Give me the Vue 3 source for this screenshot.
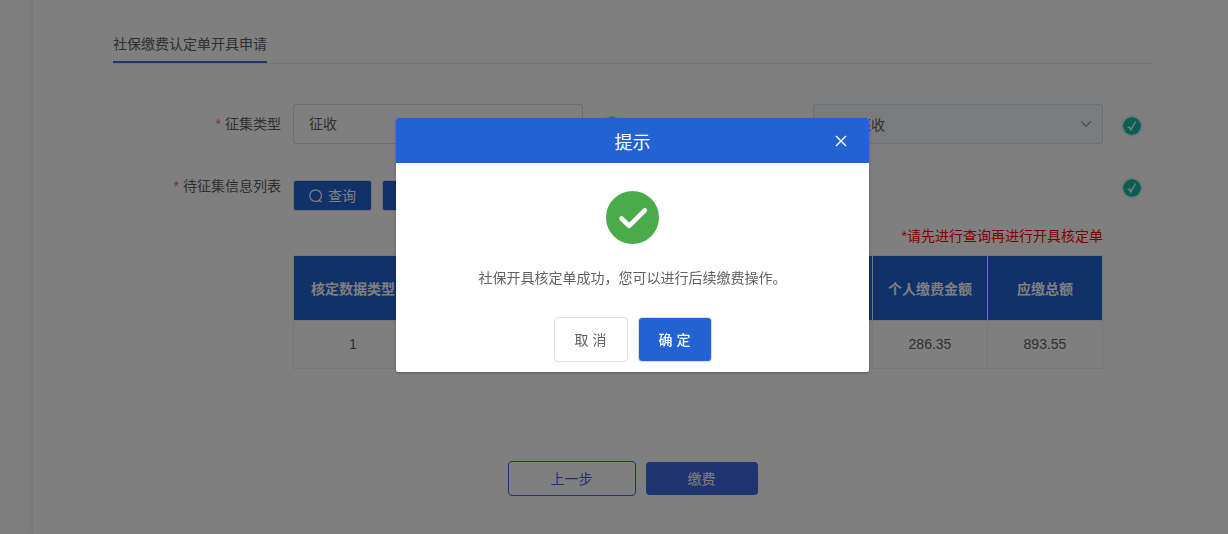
<script setup>
import { ref } from 'vue'

const collectType = ref('征收')
const collectMode = ref('正常征收')
const dialogOpen = ref(true)
const columns = ['核定数据类型', '', '', '', '', '个人缴费金额', '应缴总额']
const rows = [['1', '', '', '', '', '286.35', '893.55']]
</script>

<template>
  <div class="page">
    <aside class="side"></aside>
    <main class="main">
      <header class="tabs">
        <h1 class="tab">社保缴费认定单开具申请</h1>
      </header>

      <form class="form" @submit.prevent>
        <div class="row fields">
          <label class="label" for="collect-type"><span class="star">*</span>征集类型</label>
          <input id="collect-type" v-model="collectType" class="control" type="text" />
          <span class="status">
            <svg class="ok" viewBox="0 0 18 18"><circle cx="9" cy="9" r="9" /><path d="M5 10.6 L6.6 10 L7.6 13.2 L12.4 5" /></svg>
          </span>
          <span></span>
          <div class="select-box">
            <select v-model="collectMode" class="control muted" aria-label="征收">
              <option>正常征收</option>
            </select>
            <svg class="arrow" viewBox="0 0 12 8"><path d="M1 1.2 L6 6.5 L11 1.2" /></svg>
          </div>
          <span class="status">
            <svg class="ok" viewBox="0 0 18 18"><circle cx="9" cy="9" r="9" /><path d="M5 10.6 L6.6 10 L7.6 13.2 L12.4 5" /></svg>
          </span>
        </div>

        <div class="row list">
          <span id="list-label" class="label"><span class="star">*</span>待征集信息列表</span>
          <div class="content">
            <div class="tools">
              <button class="tool" type="button">
                <svg class="search" viewBox="0 0 14 14"><circle cx="6.6" cy="6.6" r="5.8" /><path d="M9.6 11.4 L12.6 13" /></svg>
                查询
              </button>
              <button class="tool" type="button" aria-label="开具核定单"></button>
            </div>
            <p class="note">*请先进行查询再进行开具核定单</p>
            <table class="table" aria-labelledby="list-label">
              <colgroup>
                <col />
                <col v-for="n in 6" :key="n" class="col" />
              </colgroup>
              <thead>
                <tr><th v-for="(c, i) in columns" :key="i">{{ c }}</th></tr>
              </thead>
              <tbody>
                <tr v-for="(r, i) in rows" :key="i">
                  <td v-for="(v, j) in r" :key="j">{{ v }}</td>
                </tr>
              </tbody>
            </table>
          </div>
          <span class="status">
            <svg class="ok" viewBox="0 0 18 18"><circle cx="9" cy="9" r="9" /><path d="M5 10.6 L6.6 10 L7.6 13.2 L12.4 5" /></svg>
          </span>
        </div>

        <div class="actions">
          <button class="prev" type="button">上一步</button>
          <button class="pay" type="submit">缴费</button>
        </div>
      </form>
    </main>

    <div v-if="dialogOpen" class="overlay">
      <section class="dialog" role="dialog" aria-modal="true" aria-labelledby="dialog-title">
        <header class="dialog-head">
          <h2 id="dialog-title" class="dialog-title">提示</h2>
          <button class="close" type="button" aria-label="关闭" @click="dialogOpen = false">
            <svg viewBox="0 0 12 12"><path d="M1 1 L11 11 M11 1 L1 11" /></svg>
          </button>
        </header>
        <div class="dialog-body">
          <svg class="success" viewBox="0 0 53 53"><circle cx="26.5" cy="26.5" r="26.5" /><path d="M15.5 27.5 L23.2 34.8 L38.8 19.3" /></svg>
          <p class="message">社保开具核定单成功，您可以进行后续缴费操作。</p>
          <div class="dialog-actions">
            <button class="choice" type="button" @click="dialogOpen = false">取 消</button>
            <button class="choice confirm" type="button" @click="dialogOpen = false">确 定</button>
          </div>
        </div>
      </section>
    </div>
  </div>
</template>

<style>
body {
  margin: 0;
  background: #fff;
}
</style>

<style scoped>
* {
  box-sizing: border-box;
}
.page {
  display: grid;
  grid-template-columns: 33px minmax(0, 1fr);
  min-height: 100vh;
  color: #606266;
  font: 14px/20px "Liberation Sans", "Noto Sans CJK SC", sans-serif;
}
button,
input,
select {
  font: inherit;
}
button {
  padding: 0;
  cursor: pointer;
}
svg {
  display: block;
  fill: none;
}
.side {
  background: #fdfdfd;
}
.main {
  padding: 24px 76px 38px 80px;
  background: #fff;
  box-shadow: 0 0 5px rgba(40, 40, 90, 0.12);
}
.tabs {
  display: flex;
  border-bottom: 1px solid #e4e7ed;
}
.tab {
  margin: 0;
  height: 39px;
  border-bottom: 2px solid #4169e1;
  font-size: 14px;
  font-weight: 400;
  line-height: 40px;
}
.form {
  padding-top: 40px;
}
.row {
  display: grid;
}
.fields {
  grid-template-columns: 180px minmax(0, 1fr) 49px 181px minmax(0, 1fr) 49px;
}
.list {
  grid-template-columns: 180px minmax(0, 1fr) 49px;
  margin-top: 22px;
}
.label {
  padding-right: 12px;
  line-height: 40px;
  text-align: right;
}
.star {
  margin-right: 4px;
  color: #f56c6c;
}
.control {
  display: block;
  width: 100%;
  height: 40px;
  padding: 0 15px 2px;
  border: 1px solid #dcdfe6;
  border-radius: 2px;
  outline: none;
  background: #fff;
  color: #606266;
  appearance: none;
}
.muted {
  padding: 2px 15px 0;
  background: #f5f7fa;
}
.select-box {
  position: relative;
}
.arrow {
  position: absolute;
  top: 16px;
  right: 11px;
  width: 12px;
  height: 8px;
  stroke: #909399;
  stroke-width: 1.2;
  pointer-events: none;
}
.status {
  padding: 13px 0 0 20px;
}
.ok {
  width: 18px;
  height: 18px;
  border-radius: 50%;
  box-shadow: 0 0 3px rgba(22, 188, 168, 0.7);
}
.ok circle {
  fill: #16bca8;
}
.ok path {
  stroke: #fff;
  stroke-width: 1.3;
  stroke-linecap: round;
  stroke-linejoin: round;
}
.tools {
  display: flex;
  gap: 10px;
  padding: 14px 0 0;
}
.tool {
  display: flex;
  align-items: center;
  justify-content: center;
  gap: 5px;
  width: 79px;
  height: 31px;
  border: 1px solid #dcdfe6;
  border-radius: 3px;
  background: #2362d2;
  color: #fff;
}
.search {
  width: 14px;
  height: 14px;
  stroke: #fff;
  stroke-width: 1.2;
}
.note {
  margin: 15px 0 9px;
  color: #f00;
  text-align: right;
}
.table {
  width: 100%;
  border-collapse: collapse;
  table-layout: fixed;
  text-align: center;
}
.col {
  width: 115px;
}
.table th,
.table td {
  padding: 0;
  border: 1px solid #ebeef5;
  white-space: nowrap;
}
.table th {
  height: 65px;
  padding-top: 2px;
  background: #2362d2;
  color: #fff;
  font-weight: 700;
}
.table td {
  height: 48px;
  padding-bottom: 2px;
}
.actions {
  display: flex;
  align-items: center;
  justify-content: center;
  gap: 10px;
  margin-top: 92px;
}
.prev {
  width: 128px;
  height: 35px;
  border: 1px solid #4169e1;
  border-radius: 4px;
  background: #fff;
  color: #4169e1;
}
.pay {
  width: 112px;
  height: 33px;
  border: 0;
  border-radius: 4px;
  background: #4169e1;
  color: #fff;
}
.overlay {
  position: fixed;
  inset: 0;
  display: flex;
  align-items: flex-start;
  justify-content: center;
  padding: 118px 0 0 37px;
  background: rgba(0, 0, 0, 0.5);
}
.dialog {
  width: 473px;
  max-width: 90%;
  overflow: hidden;
  border-radius: 2px;
  background: #fff;
  box-shadow: 0 1px 3px rgba(0, 0, 0, 0.3);
}
.dialog-head {
  display: grid;
  grid-template-columns: 40px 1fr 40px;
  align-items: center;
  height: 45px;
  padding-right: 8px;
  padding-left: 8px;
  background: #2362d2;
  color: #fff;
}
.dialog-title {
  grid-column: 2;
  margin: 0;
  padding-top: 4px;
  font-size: 18px;
  font-weight: 400;
  line-height: 24px;
  text-align: center;
}
.close {
  display: grid;
  place-items: center;
  height: 40px;
  border: 0;
  background: none;
}
.close svg {
  width: 12px;
  height: 12px;
  stroke: #fff;
  stroke-width: 1.4;
}
.dialog-body {
  display: flex;
  flex-direction: column;
  align-items: center;
  padding: 28px 20px 10px;
}
.success {
  width: 53px;
  height: 53px;
}
.success circle {
  fill: #4bab4b;
}
.success path {
  stroke: #fff;
  stroke-width: 4.6;
  stroke-linecap: round;
  stroke-linejoin: round;
}
.message {
  margin: 24px 0 29px;
}
.dialog-actions {
  display: flex;
  gap: 10px;
}
.choice {
  width: 74px;
  height: 45px;
  border: 1px solid #dcdfe6;
  border-radius: 4px;
  background: #fff;
  color: #606266;
}
.confirm {
  background: #2362d2;
  color: #fff;
  font-weight: 500;
}
</style>
